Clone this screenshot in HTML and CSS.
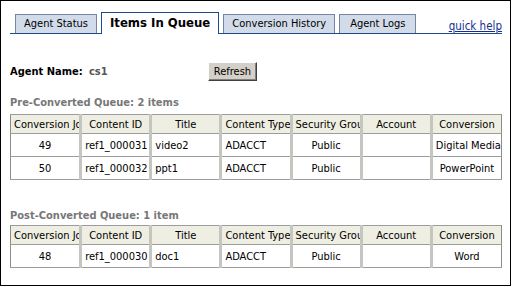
FILE: index.html
```html
<!DOCTYPE html>
<html>
<head>
<meta charset="utf-8">
<link rel="stylesheet" href="styles.css">
</head>
<body>
<div class="frame">
  <div class="tabbar">
    <div class="tab">Agent Status</div>
    <div class="tab active">Items In Queue</div>
    <div class="tab">Conversion History</div>
    <div class="tab logs">Agent Logs</div>
    <a class="help" href="#">quick help</a>
  </div>
  <div class="agent">
    <span class="agent-label">Agent Name:</span>
    <span class="agent-value">cs1</span>
    <button class="btn">Refresh</button>
  </div>
  <div class="section-title first">Pre-Converted Queue: 2 items</div>
  <table class="grid">
    <thead>
      <tr><th>Conversion Job</th><th>Content ID</th><th>Title</th><th>Content Type</th><th>Security Group</th><th>Account</th><th>Conversion</th></tr>
    </thead>
    <tbody>
      <tr><td class="c">49</td><td>ref1_000031</td><td>video2</td><td>ADACCT</td><td class="c">Public</td><td></td><td class="c">Digital Media</td></tr>
      <tr><td class="c">50</td><td>ref1_000032</td><td>ppt1</td><td>ADACCT</td><td class="c">Public</td><td></td><td class="c">PowerPoint</td></tr>
    </tbody>
  </table>
  <div class="section-title second">Post-Converted Queue: 1 item</div>
  <table class="grid">
    <thead>
      <tr><th>Conversion Job</th><th>Content ID</th><th>Title</th><th>Content Type</th><th>Security Group</th><th>Account</th><th>Conversion</th></tr>
    </thead>
    <tbody>
      <tr><td class="c">48</td><td>ref1_000030</td><td>doc1</td><td>ADACCT</td><td class="c">Public</td><td></td><td class="c">Word</td></tr>
    </tbody>
  </table>
</div>
</body>
</html>
```
FILE: styles.css
```css
html, body {
  margin: 0;
  padding: 0;
  background: #fff;
}
body {
  font-family: "DejaVu Sans Condensed", "DejaVu Sans", sans-serif;
  font-stretch: condensed;
  font-size: 11px;
  color: #000;
}
.frame {
  border: 1px solid #000;
  padding: 11px 8px 0 9px;
  box-sizing: content-box;
  width: 492px;
  height: 273px;
}
.tabbar {
  display: flex;
  align-items: flex-end;
  gap: 4px;
  padding-left: 5px;
  height: 21px;
  border-bottom: 1px solid #1f4b8e;
}
.tab {
  height: 19px;
  box-sizing: border-box;
  border: 1px solid #7586a3;
  border-bottom: none;
  background: #d2dbea;
  padding: 0 8px;
  line-height: 18px;
  font-size: 11px;
  white-space: nowrap;
}
.tab.logs {
  padding: 0 10px;
}
.tab.active {
  height: 22px;
  margin-bottom: -1px;
  background: #fff;
  border-color: #1f4b8e;
  font-weight: bold;
  font-size: 13px;
  line-height: 20px;
  padding: 0 8px;
}
.help {
  margin-left: auto;
  color: #13308f;
  font-size: 11.5px;
  line-height: 13px;
  text-decoration: underline;
}
.agent {
  display: grid;
  grid-template-columns: 79px 119px auto;
  align-items: center;
  margin-top: 28px;
  height: 19px;
}
.agent-label {
  font-weight: bold;
}
.agent-value {
  color: #555;
  font-weight: bold;
}
.btn {
  justify-self: start;
  font-family: inherit;
  font-stretch: condensed;
  font-size: 11px;
  width: 49px;
  height: 19px;
  padding: 0;
  background: #d4d0c8;
  border: 1px solid;
  border-color: #fff #404040 #404040 #fff;
  box-shadow: inset -1px -1px 0 #808080;
  color: #000;
}
.section-title {
  font-weight: bold;
  color: #777;
  font-size: 11px;
  height: 13px;
  line-height: 13px;
}
.section-title.first {
  margin-top: 15px;
  margin-bottom: 5px;
}
.section-title.second {
  margin-top: 29px;
  margin-bottom: 3px;
}
.grid {
  width: 492px;
  table-layout: fixed;
  border-collapse: collapse;
  border: 1px solid #8c8c8c;
}
.grid th, .grid td {
  border-top: 1px solid #9c9c9c;
  border-bottom: 1px solid #9c9c9c;
  border-left: 3px solid #c6c6c0;
  border-right: 3px solid #c6c6c0;
  white-space: nowrap;
  overflow: hidden;
  padding: 0 3px;
  font-weight: normal;
  text-align: left;
}
.grid th:first-child, .grid td:first-child {
  border-left: 1px solid #8c8c8c;
}
.grid th:last-child, .grid td:last-child {
  border-right: 1px solid #8c8c8c;
}
.grid th {
  background: #efeee2;
  height: 18px;
  text-align: center;
}
.grid th:first-child {
  text-align: left;
}
.grid td {
  height: 22px;
  background: #fff;
}
.grid td.c {
  text-align: center;
}
```
